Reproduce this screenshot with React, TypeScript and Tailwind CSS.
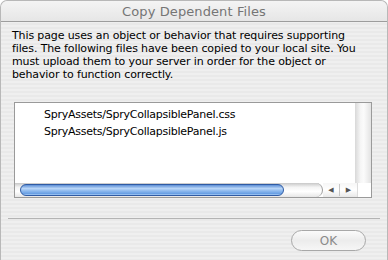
import React from "react";

const lines = [
  "This page uses an object or behavior that requires supporting",
  "files. The following files have been copied to your local site. You",
  "must upload them to your server in order for the object or",
  "behavior to function correctly.",
];

const files = ["SpryAssets/SpryCollapsiblePanel.css", "SpryAssets/SpryCollapsiblePanel.js"];

export default function App() {
  return (
    <div className="w-[388px] h-[260px] bg-white overflow-hidden font-['DejaVu_Sans',sans-serif]">
      <div className="w-[388px] h-[260px] rounded-t-[7px] border-t border-x border-[#b8b8b8] bg-[repeating-linear-gradient(180deg,#efefef_0px,#efefef_2px,#e9e9e9_2px,#e9e9e9_4px)] flex flex-col">
        {/* title bar */}
        <div className="h-[21px] shrink-0 rounded-t-[7px] border-b border-[#9d9d9d] bg-[linear-gradient(180deg,#f4f4f4,#e6e6e6)] flex items-center justify-center">
          <span className="text-[13px] leading-none text-[#757575] tracking-[0.1px]">Copy Dependent Files</span>
        </div>

        {/* message */}
        <div className="pl-[11px] pt-[7px] text-[11px] leading-[13px] text-black tracking-[-0.12px]">
          {lines.map((l) => (
            <div key={l} className="whitespace-nowrap">
              {l}
            </div>
          ))}
        </div>

        {/* file list */}
        <div className="ml-[13px] mt-[21px] w-[358px] h-[96px] border border-[#9a9a9a] bg-white flex flex-col">
          <div className="flex flex-1">
            <div className="flex-1 pl-[29px] pt-[3px] text-[11px] leading-[17px] text-black tracking-[-0.25px]">
              {files.map((f) => (
                <div key={f} className="whitespace-nowrap">
                  {f}
                </div>
              ))}
            </div>
            <div className="w-[16px] bg-[linear-gradient(90deg,#d8d8d8,#f6f6f6_35%,#fbfbfb_55%,#e3e3e3)]" />
          </div>
          <div className="h-[14px] flex">
            <div className="w-[308px] h-[14px] pl-[1px] py-[1px] rounded-r-full bg-[linear-gradient(180deg,#c8c8c8,#f4f4f4_30%,#ffffff_60%,#e6e6e6)] border-r border-[#9a9a9a]">
              <div className="ml-[4px] w-[264px] h-[12px] rounded-full border border-[#2f5ba4] bg-[linear-gradient(180deg,#5d8fd6,#b8d5f7_35%,#8db9ee_60%,#6aa0e4_85%,#a9cdf5)]" />
            </div>
            <div className="w-[34px] h-[14px] flex items-center bg-[linear-gradient(180deg,#f6f6f6,#ffffff_50%,#e8e8e8)]">
              <div className="w-[16px] flex justify-center text-[7px] leading-none text-[#555]">◀</div>
              <div className="w-px h-[12px] bg-[#c6c6c6]" />
              <div className="flex-1 flex justify-center text-[7px] leading-none text-[#555]">▶</div>
            </div>
            <div className="w-[14px] h-[14px] bg-white border-l border-[#dcdcdc]" />
          </div>
        </div>

        {/* separator */}
        <div className="mx-[7px] mt-[20px] h-px bg-[#b4b4b4]" />

        {/* buttons */}
        <div className="flex justify-end pr-[21px] mt-[11px]">
          <div className="w-[75px] h-[21px] rounded-full border border-[#a8a8a8] bg-[linear-gradient(180deg,#fbfbfb,#ececec_50%,#f6f6f6)] flex items-center justify-center text-[12px] text-[#8a8a8a]">
            OK
          </div>
        </div>
      </div>
    </div>
  );
}
